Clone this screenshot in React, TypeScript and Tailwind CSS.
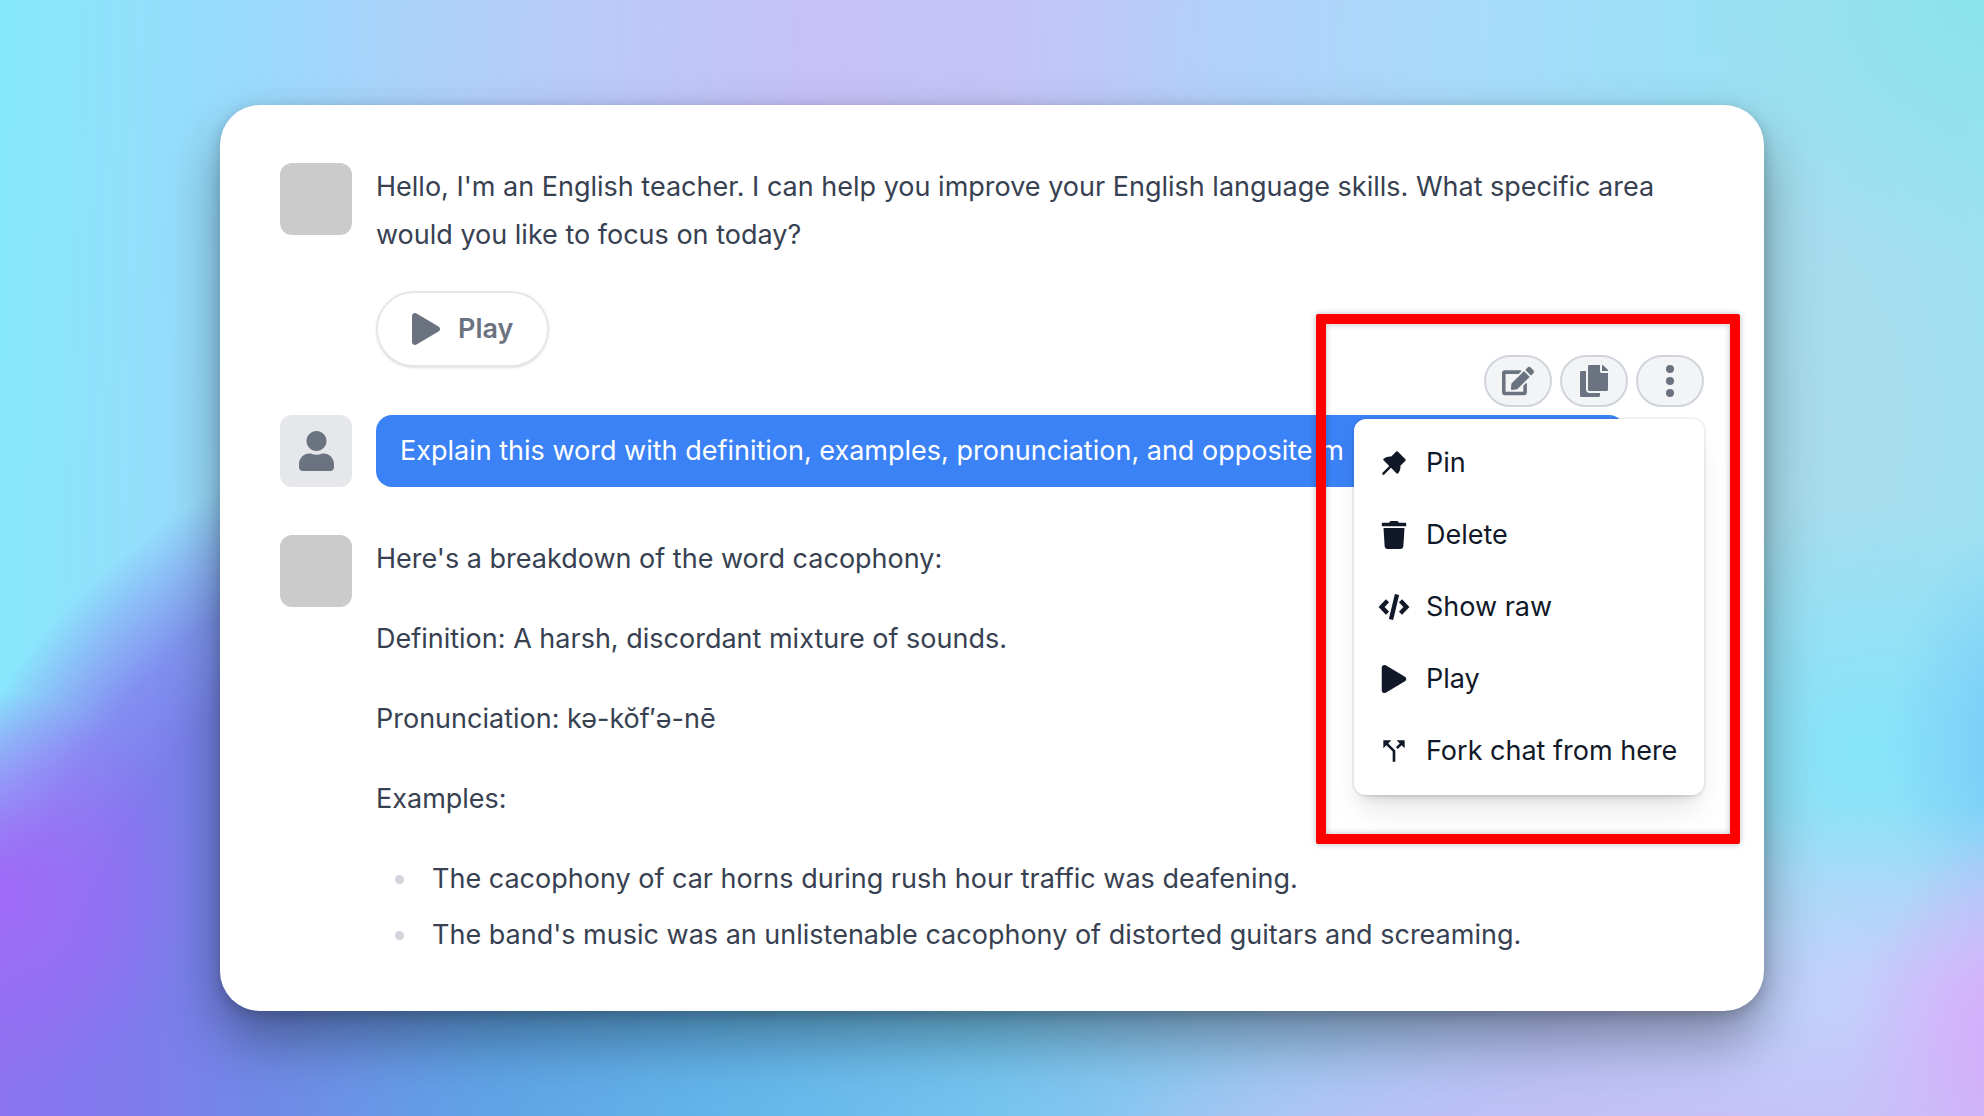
import type { ReactNode } from "react";
import { AiFillPushpin } from "react-icons/ai";
import { MdCallSplit } from "react-icons/md";
import { FaEdit, FaPlay, FaTrash } from "react-icons/fa";

function UserIcon() {
  return (
    <svg viewBox="0 0 448 512" fill="currentColor" className="h-10" aria-hidden="true">
      <path d="M224 256c70.7 0 128-57.3 128-128S294.7 0 224 0 96 57.3 96 128s57.3 128 128 128zm89.6 32h-16.7c-22.2 10.2-46.9 16-72.9 16s-50.6-5.8-72.9-16h-16.7C60.2 288 0 348.2 0 422.4V464c0 26.5 21.5 48 48 48h352c26.5 0 48-21.5 48-48v-41.6c0-74.2-60.2-134.4-134.4-134.4z" />
    </svg>
  );
}

function CopyIcon() {
  return (
    <svg viewBox="0 0 448 512" fill="currentColor" className="h-8" aria-hidden="true">
      <path d="M320 448v40c0 13.255-10.745 24-24 24H24c-13.255 0-24-10.745-24-24V120c0-13.255 10.745-24 24-24h72v296c0 30.879 25.121 56 56 56h168zm0-344V0H152c-13.255 0-24 10.745-24 24v368c0 13.255 10.745 24 24 24h272c13.255 0 24-10.745 24-24V128H344c-13.2 0-24-10.8-24-24zm120.971-31.029L375.029 7.029A24 24 0 0 0 358.059 0H352v96h96v-6.059a24 24 0 0 0-7.029-16.97z" />
    </svg>
  );
}

function DotsIcon() {
  return (
    <svg viewBox="0 0 8 32" fill="currentColor" className="h-8" aria-hidden="true">
      <circle cx="4" cy="4" r="4" />
      <circle cx="4" cy="16" r="4" />
      <circle cx="4" cy="28" r="4" />
    </svg>
  );
}

function CodeIcon() {
  return (
    <svg viewBox="0 0 32 26" fill="none" stroke="currentColor" strokeWidth="4.4" className="w-8" aria-hidden="true">
      <path d="M9.5 6.8 3.6 13l5.9 6.2M22.5 6.8l5.9 6.2-5.9 6.2M19 .6 13 25.4" />
    </svg>
  );
}

const menuItems: { label: string; icon: ReactNode }[] = [
  { label: "Pin", icon: <AiFillPushpin className="size-8" /> },
  { label: "Delete", icon: <FaTrash className="size-7" /> },
  { label: "Show raw", icon: <CodeIcon /> },
  { label: "Play", icon: <FaPlay className="h-7 w-8" /> },
  { label: "Fork chat from here", icon: <MdCallSplit className="size-8" /> },
];

const actions: { label: string; icon: ReactNode }[] = [
  { label: "Edit", icon: <FaEdit className="size-8" /> },
  { label: "Copy", icon: <CopyIcon /> },
  { label: "More", icon: <DotsIcon /> },
];

const examples = [
  "The cacophony of car horns during rush hour traffic was deafening.",
  "The band's music was an unlistenable cacophony of distorted guitars and screaming.",
];

function Backdrop() {
  return (
    <div className="absolute inset-0 -z-10 overflow-hidden bg-[linear-gradient(92deg,#86e8fd_0%,#8ee2fc_5%,#9cdafd_13%,#b3cffb_24%,#c6c1f8_40%,#c4c4f8_50%,#b3d0fb_60%,#a8dbfb_72%,#9ce0f6_84%,#a4dff1_90%,#9ce2f2_100%)]">
      <div className="absolute inset-0 bg-[radial-gradient(ellipse_16%_24%_at_100%_0%,#8ae3eb_0%,transparent_100%),radial-gradient(ellipse_7%_20%_at_102%_67%,#74c8f8_0%,transparent_100%),radial-gradient(ellipse_16%_22%_at_94%_67%,#86e4fb_0%,transparent_100%),radial-gradient(ellipse_12%_36%_at_92%_38%,#a8dcec_0%,transparent_100%)]" />
      <div className="absolute inset-0 bg-[linear-gradient(90deg,#8b74f0_0%,#8079ee_6%,#7189e6_13%,#5fa4e6_25%,#62b4ea_36%,#74c4ee_50%,#9cc8f2_64%,#b4c4f4_78%,#c0d2fc_90%,#c8c8fb_100%)] [mask-image:radial-gradient(circle_at_27%_94%,black_26%,rgba(0,0,0,0.8)_30%,transparent_36%),linear-gradient(180deg,transparent_72%,black_88%)]" />
      <div className="absolute inset-0 bg-[radial-gradient(ellipse_10%_18%_at_0%_80%,#a069f7_0%,transparent_100%),radial-gradient(ellipse_32%_14%_at_86%_104%,#c8bcf7_0%,transparent_100%),radial-gradient(ellipse_9%_24%_at_102%_98%,#dca2fb_0%,transparent_100%)]" />
    </div>
  );
}

function Message({ avatar, children }: { avatar: ReactNode; children: ReactNode }) {
  return (
    <article className="relative flex items-start gap-6">
      {avatar}
      <div className="min-w-0 flex-1">{children}</div>
    </article>
  );
}

const botAvatar = <div className="size-18 shrink-0 rounded-xl bg-[#cbcbcb]" />;

const userAvatar = (
  <div className="flex size-18 shrink-0 items-center justify-center rounded-xl bg-[#e5e7eb] text-[#6b7280]">
    <UserIcon />
  </div>
);

export default function App() {
  return (
    <div className="relative isolate flex min-h-screen items-center px-[220px] font-['Inter',sans-serif] text-[27px] leading-12 text-[#374151]">
      <Backdrop />
      <main className="flex min-w-0 flex-1 flex-col gap-12 rounded-[40px] bg-white px-[60px] pt-[58px] pb-[52px] shadow-[0_28px_56px_rgba(0,0,0,0.36),0_4px_14px_rgba(0,0,0,0.18)]">
        <Message avatar={botAvatar}>
          <p>
            Hello, I'm an English teacher. I can help you improve your English language skills. What specific area
            would you like to focus on today?
          </p>
          <button
            type="button"
            className="mt-8 flex h-[76px] items-center gap-[18px] rounded-full border-2 border-[#e5e7eb] bg-white px-[34px] font-semibold text-[#6b7280] shadow-sm"
          >
            <FaPlay className="h-8 w-7" />
            Play
          </button>
        </Message>

        <Message avatar={userAvatar}>
          <p className="w-[1249px] max-w-full overflow-hidden rounded-2xl bg-[#3b82f6] px-6 py-3 whitespace-nowrap text-white">
            Explain this word with definition, examples, pronunciation, and opposite m
          </p>
          <div className="absolute right-0 bottom-full mb-2 flex gap-2">
            {actions.map(({ label, icon }) => (
              <button
                key={label}
                type="button"
                aria-label={label}
                className="flex h-13 w-17 items-center justify-center rounded-full border-2 border-[#d1d5db] bg-[#f3f4f6] text-[#6b7280]"
              >
                {icon}
              </button>
            ))}
          </div>
          <div
            role="menu"
            className="absolute top-1 right-0 min-w-[350px] rounded-xl bg-white py-2 whitespace-nowrap text-[#111827] shadow-[0_0_0_2px_rgba(0,0,0,0.05),0_20px_30px_-6px_rgba(0,0,0,0.1),0_8px_12px_-8px_rgba(0,0,0,0.2)]"
          >
            {menuItems.map(({ label, icon }) => (
              <button key={label} type="button" role="menuitem" className="flex w-full items-center gap-4 px-6 py-3">
                <span className="flex w-8 justify-center">{icon}</span>
                {label}
              </button>
            ))}
          </div>
          <div className="pointer-events-none absolute -top-[101px] -right-9 h-[530px] w-[424px] rounded-xs border-10 border-[#ff0000] shadow-[0_0_6px_rgba(0,0,0,0.25),inset_0_0_6px_rgba(0,0,0,0.25)]" />
        </Message>

        <Message avatar={botAvatar}>
          <div className="flex flex-col gap-8">
            <p>Here's a breakdown of the word cacophony:</p>
            <p>Definition: A harsh, discordant mixture of sounds.</p>
            <p>Pronunciation: kə-kŏf′ə-nē</p>
            <p>Examples:</p>
            <ul className="flex flex-col gap-2">
              {examples.map((text) => (
                <li key={text} className="flex items-center gap-7 pl-[19px]">
                  <span className="size-[9px] shrink-0 rounded-full bg-[#d1d5db]" />
                  {text}
                </li>
              ))}
            </ul>
          </div>
        </Message>
      </main>
    </div>
  );
}
